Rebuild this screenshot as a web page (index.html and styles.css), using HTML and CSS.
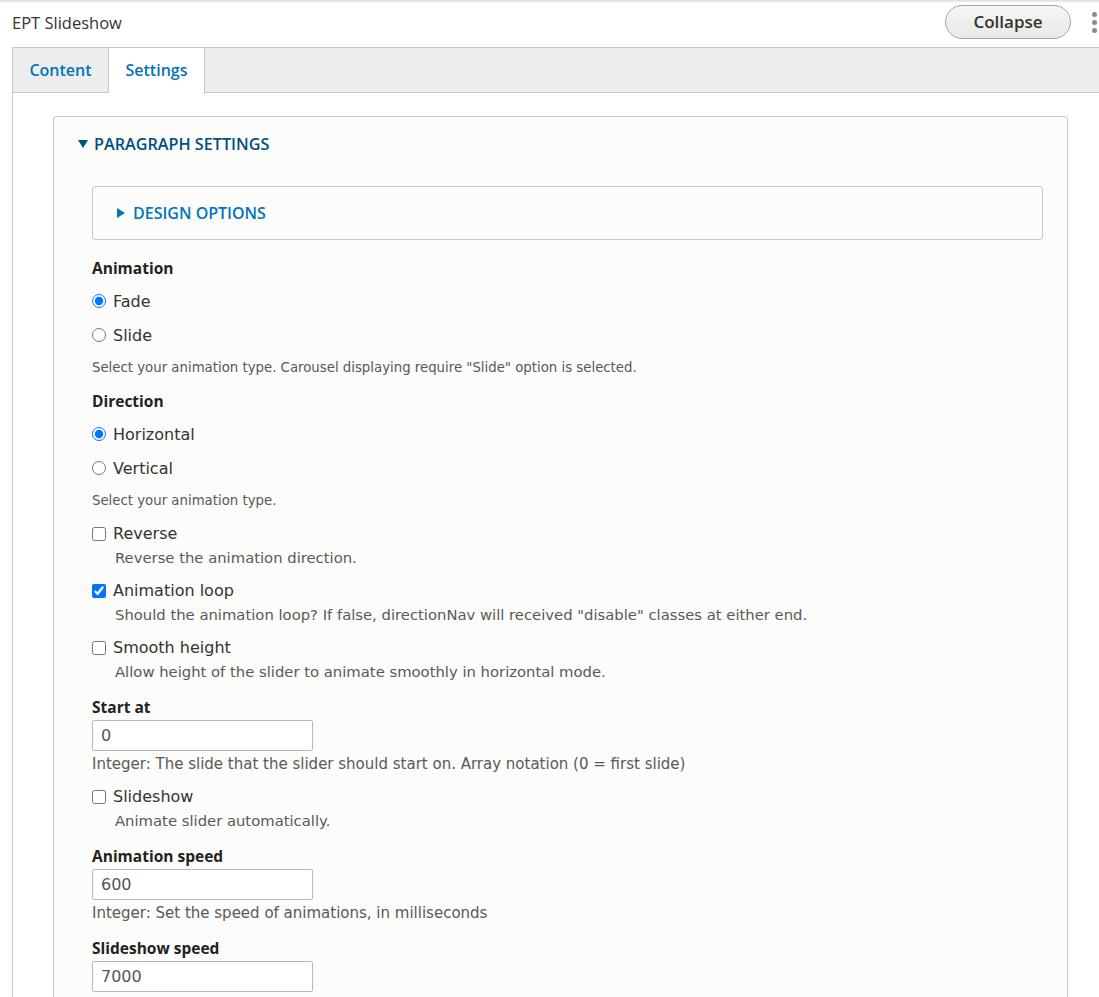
FILE: index.html
```html
<!DOCTYPE html>
<html lang="en">
<head>
  <meta charset="UTF-8" />
  <meta name="viewport" content="width=device-width, initial-scale=1.0" />
  <title>EPT Slideshow - Paragraph settings</title>
  <link rel="stylesheet" href="styles.css">
</head>
<body>
  <div class="para-item">
    <div class="item-head">
      <span class="item-title">EPT Slideshow</span>
      <div class="item-actions">
        <button class="btn-collapse" type="button">Collapse</button>
        <span class="kebab"><i></i><i></i><i></i></span>
      </div>
    </div>

    <div class="item-body">
      <ul class="tabs">
        <li><a href="#">Content</a></li>
        <li class="active"><a href="#">Settings</a></li>
      </ul>

      <div class="tab-pane">
        <div class="details">
          <div class="summary open">Paragraph settings</div>

          <div class="details-wrapper">
            <div class="details inner">
              <div class="summary">Design options</div>
            </div>

            <div class="form-item first">
              <span class="form-label">Animation</span>
              <div class="radios">
                <label class="radio"><input type="radio" name="animation" checked> Fade</label>
                <label class="radio"><input type="radio" name="animation"> Slide</label>
              </div>
              <div class="description small">Select your animation type. Carousel displaying require "Slide" option is selected.</div>
            </div>

            <div class="form-item">
              <span class="form-label">Direction</span>
              <div class="radios">
                <label class="radio"><input type="radio" name="direction" checked> Horizontal</label>
                <label class="radio"><input type="radio" name="direction"> Vertical</label>
              </div>
              <div class="description small">Select your animation type.</div>
            </div>

            <div class="form-item check">
              <label class="checkbox"><input type="checkbox"> Reverse</label>
              <div class="description">Reverse the animation direction.</div>
            </div>

            <div class="form-item check">
              <label class="checkbox"><input type="checkbox" checked> Animation loop</label>
              <div class="description">Should the animation loop? If false, directionNav will received "disable" classes at either end.</div>
            </div>

            <div class="form-item check">
              <label class="checkbox"><input type="checkbox"> Smooth height</label>
              <div class="description">Allow height of the slider to animate smoothly in horizontal mode.</div>
            </div>

            <div class="form-item text">
              <label class="form-label" for="start-at">Start at</label>
              <input type="text" id="start-at" value="0">
              <div class="description">Integer: The slide that the slider should start on. Array notation (0 = first slide)</div>
            </div>

            <div class="form-item check">
              <label class="checkbox"><input type="checkbox"> Slideshow</label>
              <div class="description">Animate slider automatically.</div>
            </div>

            <div class="form-item text">
              <label class="form-label" for="anim-speed">Animation speed</label>
              <input type="text" id="anim-speed" value="600">
              <div class="description">Integer: Set the speed of animations, in milliseconds</div>
            </div>

            <div class="form-item text">
              <label class="form-label" for="show-speed">Slideshow speed</label>
              <input type="text" id="show-speed" value="7000">
            </div>
          </div>
        </div>
      </div>
    </div>
  </div>
</body>
</html>
```

FILE: styles.css
```css
:root {
  --link: #0074bd;
  --link-dark: #004f80;
  --border: #c8c8c8;
  --text: #333;
  --muted: #595959;
}

* {
  box-sizing: border-box;
}

body {
  margin: 0;
  background: #fff;
  color: var(--text);
  font-family: "DejaVu Sans", sans-serif;
  overflow: hidden;
}

/* header row with title and actions */
.item-head {
  height: 47px;
  display: flex;
  align-items: center;
  justify-content: space-between;
  padding-left: 12px;
  box-shadow: inset 0 2px 0 #e4e4e4;
}

.item-title {
  font-family: "Open Sans", sans-serif;
  font-size: 16.5px;
  color: #333;
  margin-top: -3px;
}

.item-actions {
  display: flex;
  align-items: center;
  margin-top: -3px;
}

.btn-collapse {
  width: 126px;
  height: 34px;
  border: 1px solid #a6a6a6;
  border-radius: 20px;
  background: linear-gradient(#f6f6f3, #e8e8e4);
  font-family: "Open Sans", sans-serif;
  font-weight: 600;
  font-size: 17px;
  color: #333;
  padding: 0 0 2px;
  cursor: pointer;
}

.kebab {
  width: 10px;
  margin-left: 18px;
  display: flex;
  flex-direction: column;
  align-items: center;
  gap: 3px;
}

.kebab i {
  width: 5px;
  height: 5px;
  border-radius: 50%;
  background: #8a8a8a;
}

/* tabs */
.item-body {
  margin-left: 12px;
  border-left: 1px solid var(--border);
}

.tabs {
  list-style: none;
  margin: 0;
  padding: 0;
  display: flex;
  height: 46px;
  background: #ededed;
  border-top: 1px solid var(--border);
  border-bottom: 1px solid var(--border);
}

.tabs li {
  width: 96px;
  border-right: 1px solid var(--border);
}

.tabs li.active {
  background: #fff;
  height: 46px;
}

.tabs a {
  display: block;
  text-align: center;
  line-height: 44px;
  font-family: "Open Sans", sans-serif;
  font-weight: 600;
  font-size: 16px;
  color: var(--link);
  text-decoration: none;
}

.tab-pane {
  padding: 23px 31px 0 40px;
}

/* collapsible fieldsets */
.details {
  border: 1px solid var(--border);
  border-radius: 3px;
  background: #fcfcfa;
  padding-bottom: 40px;
}

.details.inner {
  padding-bottom: 0;
  margin-top: 32px;
}

.summary {
  display: flex;
  align-items: center;
  line-height: 20px;
  font-family: "Open Sans", sans-serif;
  font-weight: 600;
  font-size: 16px;
  text-transform: uppercase;
  color: var(--link);
  padding: 16px 0 16px 24px;
}

.summary::before {
  content: "";
  margin-right: 8px;
  border-style: solid;
  border-width: 5px 0 5px 8px;
  border-color: transparent transparent transparent var(--link);
}

.summary.open {
  color: var(--link-dark);
  font-size: 16.2px;
  padding: 17px 0 0 24px;
}

.summary.open::before {
  border-width: 8px 5px 0 5px;
  border-color: var(--link-dark) transparent transparent transparent;
  margin-right: 6px;
}

.details-wrapper {
  padding: 0 24px 0 38px;
}

/* form elements */
.form-item {
  margin-top: 13px;
}

.form-item.first {
  margin-top: 18px;
}

.form-item.text {
  margin-top: 15px;
}

.form-label {
  display: block;
  line-height: 20px;
  font-family: "Open Sans", sans-serif;
  font-weight: 700;
  font-size: 15.5px;
  color: #222;
}

.radios {
  margin-top: 6px;
}

.radio,
.checkbox {
  display: flex;
  align-items: center;
  font-size: 16px;
  color: #333;
}

.radio {
  height: 34px;
}

.checkbox {
  line-height: 20px;
}

.radio input,
.checkbox input {
  width: 14px;
  height: 14px;
  margin: 0 7px 0 0;
  accent-color: #0075ff;
}

.description {
  line-height: 20px;
  font-size: 14.8px;
  color: var(--muted);
  margin-top: 4px;
}

.description.small {
  font-size: 13.3px;
  margin-top: 6px;
}

.check .description {
  padding-left: 23px;
}

.text .description {
  font-size: 15px;
  margin-top: 3px;
}

.form-item input[type="text"] {
  display: block;
  width: 221px;
  height: 31px;
  margin-top: 3px;
  padding: 0 8px;
  border: 1px solid #b8b8b8;
  border-radius: 2px;
  background: #fff;
  font-family: "DejaVu Sans", sans-serif;
  font-size: 16px;
  color: #555;
}
```
